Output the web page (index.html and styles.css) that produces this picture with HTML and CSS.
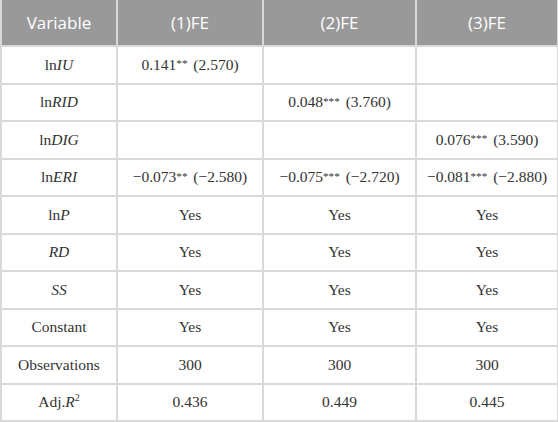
FILE: index.html
```html
<!DOCTYPE html>
<html>
<head>
<meta charset="utf-8">
<link rel="stylesheet" href="styles.css">
</head>
<body>
<table class="reg">
  <colgroup>
    <col class="c1"><col class="c2"><col class="c3"><col class="c4">
  </colgroup>
  <thead>
    <tr class="head">
      <th>Variable</th><th>(1)FE</th><th>(2)FE</th><th>(3)FE</th>
    </tr>
  </thead>
  <tbody>
    <tr><td>ln<i>IU</i></td><td>0.141<span class="st">**</span> (2.570)</td><td></td><td></td></tr>
    <tr><td>ln<i>RID</i></td><td></td><td>0.048<span class="st">***</span> (3.760)</td><td></td></tr>
    <tr><td>ln<i>DIG</i></td><td></td><td></td><td>0.076<span class="st">***</span> (3.590)</td></tr>
    <tr><td>ln<i>ERI</i></td><td>−0.073<span class="st">**</span> (−2.580)</td><td>−0.075<span class="st">***</span> (−2.720)</td><td>−0.081<span class="st">***</span> (−2.880)</td></tr>
    <tr><td>ln<i>P</i></td><td>Yes</td><td>Yes</td><td>Yes</td></tr>
    <tr><td><i>RD</i></td><td>Yes</td><td>Yes</td><td>Yes</td></tr>
    <tr><td><i>SS</i></td><td>Yes</td><td>Yes</td><td>Yes</td></tr>
    <tr><td>Constant</td><td>Yes</td><td>Yes</td><td>Yes</td></tr>
    <tr><td>Observations</td><td>300</td><td>300</td><td>300</td></tr>
    <tr><td>Adj.<i>R</i><sup>2</sup></td><td>0.436</td><td>0.449</td><td>0.445</td></tr>
  </tbody>
</table>
</body>
</html>
```
FILE: styles.css
```css
html, body {
  margin: 0;
  padding: 0;
  background: #ffffff;
}
.reg {
  border-collapse: collapse;
  table-layout: fixed;
  width: 557px;
  font-family: "Liberation Serif", "Times New Roman", serif;
  font-size: 15.5px;
  color: #333333;
}
.c1 { width: 116px; }
.c2 { width: 146px; }
.c3 { width: 153px; }
.c4 { width: 142px; }
.reg th, .reg td {
  border: 2px solid #d9d9d9;
  text-align: center;
  vertical-align: middle;
  padding: 0;
}
.head th {
  background: #999999;
  color: #ffffff;
  font-family: "Open Sans", sans-serif;
  font-weight: normal;
  font-size: 17px;
  height: 45px;
  border-top: none;
}
.reg td {
  height: 35.5px;
}
.st {
  font-size: 0.72em;
  vertical-align: 0.22em;
  line-height: 0;
  margin-right: 2px;
}
.reg sup {
  font-size: 10px;
  line-height: 0;
  vertical-align: 6px;
}
```
